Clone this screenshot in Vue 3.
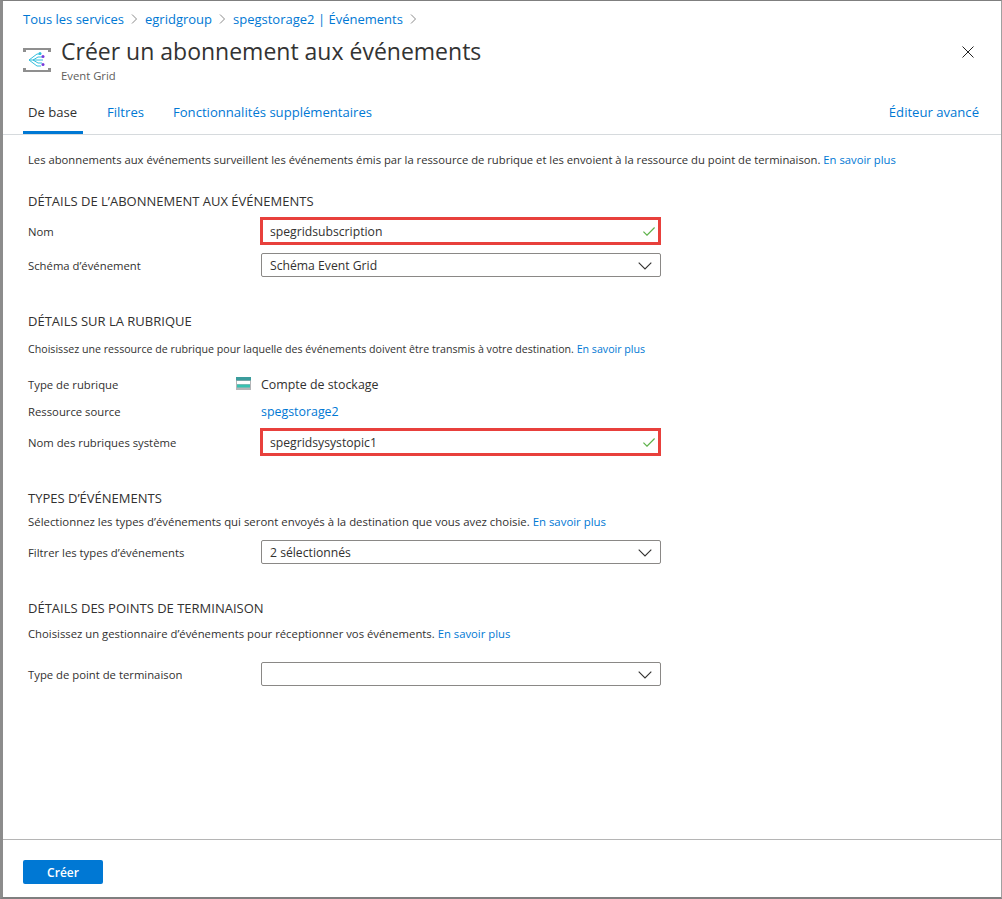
<script setup>
const learnMore = 'En savoir plus'
</script>

<template>
  <div class="page">
    <div class="top">
      <nav class="crumbs">
        <a>Tous les services</a><span class="sep"><svg width="7" height="10" viewBox="0 0 7 10"><path d="M1 .5 5.5 5 1 9.5" /></svg></span>
        <a>egridgroup</a><span class="sep"><svg width="7" height="10" viewBox="0 0 7 10"><path d="M1 .5 5.5 5 1 9.5" /></svg></span>
        <a>spegstorage2 | Événements</a><span class="sep"><svg width="7" height="10" viewBox="0 0 7 10"><path d="M1 .5 5.5 5 1 9.5" /></svg></span>
      </nav>
      <div class="heading">
        <svg class="logo" width="28" height="24" viewBox="0 0 28 24">
          <path d="M0 0h28v4h-3V2H3v2H0zM0 24v-4h3v2h22v-2h3v4z" fill="#8f8f8f" />
          <path d="M6 12 14 6h4M6 12h14M6 12l8 6h4M10 12l5-3h4M10 12l5 3h4" stroke="#32bedd" stroke-width="1" fill="none" />
          <circle cx="17" cy="5.5" r="1.5" fill="#32bedd" />
          <circle cx="20" cy="8.5" r="1.5" fill="#773adc" />
          <circle cx="20" cy="16.5" r="1.5" fill="#773adc" />
        </svg>
        <div class="titles">
          <h1>Créer un abonnement aux événements</h1>
          <div class="sub">Event Grid</div>
        </div>
        <svg class="close" width="12" height="12" viewBox="0 0 12 12"><path d="M.5.5l11 11M11.5.5l-11 11" /></svg>
      </div>
      <div class="tabs">
        <span class="tab active">De base</span>
        <span class="tab">Filtres</span>
        <span class="tab">Fonctionnalités supplémentaires</span>
        <span class="tab advanced">Éditeur avancé</span>
      </div>
    </div>

    <main class="body">
      <p class="intro">Les abonnements aux événements surveillent les événements émis par la ressource de rubrique et les envoient à la ressource du point de terminaison. <a>{{ learnMore }}</a></p>

      <section class="first">
        <h2>DÉTAILS DE L’ABONNEMENT AUX ÉVÉNEMENTS</h2>
        <div class="row tall">
          <label>Nom</label>
          <div class="input marked">spegridsubscription
            <svg class="check" width="12" height="9" viewBox="0 0 12 9"><path d="M.4 4.6 4 8.2 11.6.5" /></svg>
          </div>
        </div>
        <div class="row">
          <label>Schéma d’événement</label>
          <div class="input">Schéma Event Grid
            <svg class="chev" width="14" height="8" viewBox="0 0 14 8"><path d="M.7.7 7 7l6.3-6.3" /></svg>
          </div>
        </div>
      </section>

      <section class="second">
        <h2>DÉTAILS SUR LA RUBRIQUE</h2>
        <p class="desc narrow">Choisissez une ressource de rubrique pour laquelle des événements doivent être transmis à votre destination. <a>{{ learnMore }}</a></p>
        <div class="row plain topgap">
          <label>Type de rubrique</label>
          <svg class="storage" width="15" height="13" viewBox="0 0 15 13">
            <rect width="15" height="13" fill="#b4b5b7" />
            <rect width="15" height="3.5" fill="#3b9c9c" />
            <rect x="1" y="4" width="13" height="3" fill="#fff" />
            <rect x="1" y="7.5" width="13" height="3" fill="#37c2b1" />
          </svg>
          <span>Compte de stockage</span>
        </div>
        <div class="row plain">
          <label>Ressource source</label>
          <a>spegstorage2</a>
        </div>
        <div class="row tall">
          <label>Nom des rubriques système</label>
          <div class="input marked">spegridsysystopic1
            <svg class="check" width="12" height="9" viewBox="0 0 12 9"><path d="M.4 4.6 4 8.2 11.6.5" /></svg>
          </div>
        </div>
      </section>

      <section class="third">
        <h2>TYPES D’ÉVÉNEMENTS</h2>
        <p class="desc close-desc">Sélectionnez les types d’événements qui seront envoyés à la destination que vous avez choisie. <a>{{ learnMore }}</a></p>
        <div class="row">
          <label>Filtrer les types d’événements</label>
          <div class="input">2 sélectionnés
            <svg class="chev" width="14" height="8" viewBox="0 0 14 8"><path d="M.7.7 7 7l6.3-6.3" /></svg>
          </div>
        </div>
      </section>

      <section class="fourth">
        <h2>DÉTAILS DES POINTS DE TERMINAISON</h2>
        <p class="desc mid-desc">Choisissez un gestionnaire d’événements pour réceptionner vos événements. <a>{{ learnMore }}</a></p>
        <div class="row endgap">
          <label>Type de point de terminaison</label>
          <div class="input">
            <svg class="chev" width="14" height="8" viewBox="0 0 14 8"><path d="M.7.7 7 7l6.3-6.3" /></svg>
          </div>
        </div>
      </section>
    </main>

    <footer class="foot">
      <button class="create">Créer</button>
    </footer>
  </div>
</template>

<style scoped>
* {
  box-sizing: border-box;
}

.page {
  width: 1002px;
  height: 899px;
  display: flex;
  flex-direction: column;
  border-top: 1px solid #7f7f7f;
  border-left: 3px solid #8c8c8c;
  border-right: 1px solid #a0a0a0;
  border-bottom: 2px solid #7f7f7f;
  background: #fff;
  color: #323130;
  font-family: "Open Sans", "Noto Sans", sans-serif;
  font-size: 11.3px;
}

a {
  color: #0078d4;
}

.top {
  padding: 0 22px 0 20px;
  border-bottom: 1px solid #d6dadd;
}

.crumbs {
  display: flex;
  align-items: center;
  height: 36px;
  font-size: 13px;
}

.sep {
  display: flex;
  margin: 0 7px;
}

.sep path {
  fill: none;
  stroke: #8a8a8a;
}

.heading {
  display: flex;
  align-items: flex-start;
  height: 48px;
}

.logo {
  margin-top: 11px;
  margin-right: 10px;
  flex: none;
}

.titles {
  flex: 1;
}

h1 {
  margin: -1px 0 0;
  font-size: 23px;
  font-weight: 500;
  line-height: 30px;
  color: #333;
}

.sub {
  font-size: 11.3px;
  color: #605e5c;
  line-height: 16px;
  margin-top: 2px;
}

.close {
  margin-top: 9px;
  margin-right: 5px;
}

.close path {
  stroke: #222;
  fill: none;
}

.tabs {
  display: flex;
  height: 49px;
  font-size: 13.1px;
}

.tab {
  display: flex;
  align-items: center;
  padding-top: 5px;
  margin-right: 29px;
  color: #0078d4;
}

.tab.active {
  color: #323130;
  width: 60px;
  padding-left: 5px;
  padding-top: 8px;
  border-bottom: 3px solid #0078d4;
  margin-right: 24px;
  white-space: nowrap;
}

.tab.advanced {
  margin-left: auto;
  margin-right: 0;
}

.body {
  flex: 1;
  padding: 0 22px 0 25px;
}

.intro {
  margin: 17px 0 0;
  font-size: 11.25px;
  line-height: 16px;
  white-space: nowrap;
}

h2 {
  margin: 0;
  font-size: 13px;
  font-weight: 400;
  line-height: 16px;
}

.first {
  margin-top: 25px;
}

.second {
  margin-top: 36px;
}

.third {
  margin-top: 34px;
}

.fourth {
  margin-top: 36px;
}

.desc {
  margin: 12px 0 0;
  line-height: 16px;
  white-space: nowrap;
}

.desc.narrow {
  font-size: 10.65px;
}

.desc.close-desc {
  margin-top: 8px;
  font-size: 11.4px;
}

.desc.mid-desc {
  margin-top: 10px;
}

.row {
  display: flex;
  align-items: center;
  height: 24px;
  margin-top: 8px;
}

.third .row {
  margin-top: 10px;
}

.row.tall {
  height: 28px;
}

.second .row.tall {
  margin-top: 9px;
}

.row.plain {
  height: 16px;
  margin-top: 11px;
  font-size: 12.4px;
}

.row.topgap {
  margin-top: 19px;
}

.row.endgap {
  margin-top: 20px;
}

label {
  flex: none;
  width: 233px;
  font-size: 11.3px;
}

.storage {
  margin-left: -25px;
  margin-right: 10px;
  margin-top: -1px;
}

.input {
  position: relative;
  width: 400px;
  height: 24px;
  border: 1px solid #8a8886;
  border-radius: 2px;
  padding-left: 8px;
  font-size: 12.2px;
  line-height: 24px;
}

.input.marked {
  width: 401px;
  height: 28px;
  margin-left: -1px;
  border: 3px solid #e8403c;
  border-radius: 0;
  padding-left: 7px;
}

.check {
  position: absolute;
  right: 3px;
  top: 7px;
}

.check path {
  fill: none;
  stroke: #5db24a;
  stroke-width: 1.2;
}

.chev {
  position: absolute;
  right: 8px;
  top: 8px;
}

.chev path {
  fill: none;
  stroke: #323130;
  stroke-width: 1.1;
}

.foot {
  height: 58px;
  flex: none;
  border-top: 1px solid #b5b5b5;
  padding: 20px 0 0 20px;
}

.create {
  display: block;
  width: 80px;
  height: 24px;
  border: none;
  border-radius: 2px;
  background: #0078d4;
  color: #fff;
  font-family: inherit;
  font-size: 12px;
  font-weight: 600;
  padding: 0;
}
</style>
